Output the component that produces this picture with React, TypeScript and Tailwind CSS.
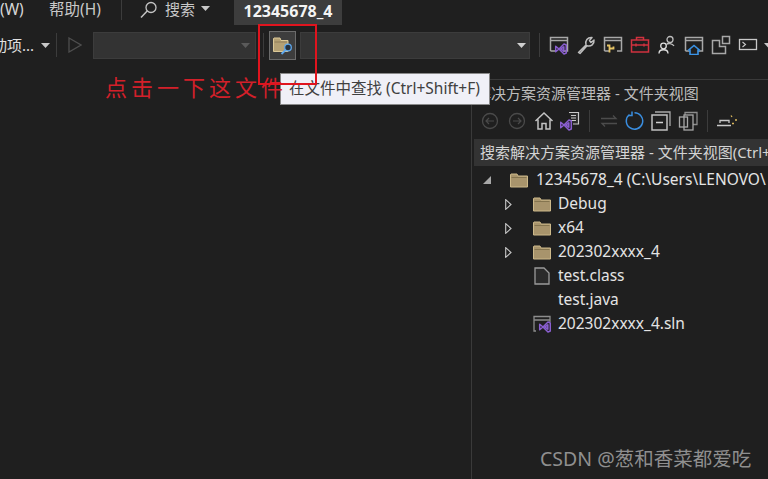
// App.tsx
import React from 'react';

const font = { fontFamily: '"Noto Sans", "Noto Sans CJK SC", sans-serif' };

// small dropdown arrow used on the menu and the combo boxes
const Caret: React.FC<{ className?: string }> = ({ className }) => (
    <svg width="9" height="5" viewBox="0 0 9 5" className={className}>
        <path d="M0 0h9L4.5 5z" fill="currentColor" />
    </svg>
);

const Sep: React.FC<{ className?: string }> = ({ className }) => (
    <div className={`w-px shrink-0 bg-[#3c3c3c] ${className ?? ''}`} />
);

const VsMark: React.FC<{ x: number; y: number }> = ({ x, y }) => (
    <path
        transform={`translate(${x} ${y})`}
        d="M0.7 3.2 L4 6 L9 1 L11.3 2 V10 L9 11 L4 6 L0.7 8.8 Z M8.8 3.8 L6 6 L8.8 8.2 Z"
        fill="none"
        stroke="#8a5fd0"
        strokeWidth="1.5"
        strokeLinejoin="round"
    />
);

const FolderIcon: React.FC = () => (
    <svg width="18" height="16" viewBox="0 0 18 16" className="shrink-0">
        <path d="M0.500 2.500V15H17.500V4H8L7 2H1z" fill="#a8946c" stroke="#cdb98a" strokeWidth="1" />
        <path d="M1.500 5.500h15" stroke="#84744f" strokeWidth="1" />
    </svg>
);

const WindowIcon: React.FC<{ children?: React.ReactNode }> = ({ children }) => (
    <svg width="20" height="20" viewBox="0 0 20 20" className="shrink-0">
        <path d="M1.500 16V2.500H18.500V16H14" fill="none" stroke="#a8a8a8" strokeWidth="1.500" />
        <path d="M1.500 5.500H18.500" stroke="#a8a8a8" strokeWidth="1.500" />
        <path d="M1.500 16H6" stroke="#a8a8a8" strokeWidth="1.500" />
        {children}
    </svg>
);

const ToolIcons: React.FC = () => (
    <div className="flex items-center gap-[7px] ml-[9px] shrink-0">
        <WindowIcon>
            <VsMark x={6} y={8} />
        </WindowIcon>
        <svg width="20" height="20" viewBox="0 0 20 20" className="shrink-0">
            <path d="M2.500 17.500 L10 10 C8.800 6 11.500 2 16 2.500 L13.500 5.500 L15 7.500 L18 5 C18.500 9 15 12 11 10.800 L4 18.500 Z" fill="none" stroke="#bdbdbd" strokeWidth="1.500" strokeLinejoin="round" />
        </svg>
        <WindowIcon>
            <path d="M4 10.500h2.500v7M6.500 13.500h4v-2" fill="none" stroke="#e5c365" strokeWidth="1.800" />
        </WindowIcon>
        <svg width="20" height="20" viewBox="0 0 20 20" className="shrink-0">
            <rect x="1.500" y="5" width="17" height="12" fill="none" stroke="#d0323f" strokeWidth="1.500" />
            <path d="M6.500 5V2.500h7V5M1.500 10h17M6 8.500v3M14 8.500v3" fill="none" stroke="#d0323f" strokeWidth="1.500" />
        </svg>
        <svg width="20" height="20" viewBox="0 0 20 20" className="shrink-0">
            <circle cx="13" cy="4.500" r="3" fill="none" stroke="#bdbdbd" strokeWidth="1.300" />
            <path d="M9.500 9.500c1-1.500 6-1.500 7.500 1.500" fill="none" stroke="#bdbdbd" strokeWidth="1.300" />
            <circle cx="6.500" cy="11" r="2.800" fill="none" stroke="#e0e0e0" strokeWidth="1.300" />
            <path d="M2 18.500c0-5 9-5 9 0" fill="none" stroke="#e0e0e0" strokeWidth="1.300" />
        </svg>
        <WindowIcon>
            <path d="M4 15.500 L10 10.500 L16 15.500 M6 14.500 V19.500 H14 V14.500" fill="#1f1f1f" stroke="#3a94e8" strokeWidth="1.600" />
        </WindowIcon>
        <svg width="20" height="20" viewBox="0 0 20 20" className="shrink-0">
            <path d="M1.500 5.500H8.500V11.500H14.500V18.500H1.500Z" fill="none" stroke="#a8a8a8" strokeWidth="1.500" />
            <rect x="11.500" y="1.500" width="7" height="7" fill="none" stroke="#a8a8a8" strokeWidth="1.500" />
        </svg>
        <svg width="20" height="20" viewBox="0 0 20 20" className="shrink-0">
            <rect x="1.500" y="4.500" width="17" height="10" fill="none" stroke="#c8c8c8" strokeWidth="1.300" />
            <path d="M4.500 7 L7.500 9.500 L4.500 12" fill="none" stroke="#c8c8c8" strokeWidth="1.100" />
        </svg>
        <Caret className="text-[#c8c8c8] -ml-[1px] shrink-0" />
    </div>
);

const PanelTools: React.FC = () => (
    <div className="flex items-center h-[30px] mb-[3px] pl-[9px] shrink-0">
        <svg width="18" height="18" viewBox="0 0 18 18" className="shrink-0">
            <circle cx="9" cy="9" r="7.500" fill="none" stroke="#4a4a4a" strokeWidth="1.300" />
            <path d="M13 9H5M8 6L5 9l3 3" fill="none" stroke="#4a4a4a" strokeWidth="1.200" />
        </svg>
        <svg width="18" height="18" viewBox="0 0 18 18" className="shrink-0 ml-[9px]">
            <circle cx="9" cy="9" r="7.500" fill="none" stroke="#4a4a4a" strokeWidth="1.300" />
            <path d="M5 9h8M10 6l3 3-3 3" fill="none" stroke="#4a4a4a" strokeWidth="1.200" />
        </svg>
        <svg width="20" height="20" viewBox="0 0 20 20" className="shrink-0 ml-[8px]">
            <path d="M1.500 10 L10 2 L18.500 10 M4 8.500V18H8V12.500H12V18H16V8.500" fill="none" stroke="#c4c4c4" strokeWidth="1.500" />
        </svg>
        <svg width="20" height="20" viewBox="0 0 20 20" className="shrink-0 ml-[6px]">
            <path d="M9 1.500H18.500V13H13" fill="#2a2a2a" stroke="#c8c8c8" strokeWidth="1.200" />
            <path d="M11 4.500h5M11 7h5M11 9.500h5" stroke="#c8c8c8" strokeWidth="1" />
            <VsMark x={0} y={8} />
        </svg>
        <Sep className="h-[22px] ml-[9px]" />
        <svg width="18" height="14" viewBox="0 0 18 14" className="shrink-0 ml-[10px]">
            <path d="M1 4.500H16L13 1.500M17 9.500H2L5 12.500" fill="none" stroke="#4c4c4c" strokeWidth="1.300" />
        </svg>
        <svg width="20" height="20" viewBox="0 0 20 20" className="shrink-0 ml-[6px]">
            <path d="M5.500 3.500 A8.200 8.200 0 1 0 10.500 1.800 M8 0.500 V4.500 H4" fill="none" stroke="#3a8ee0" strokeWidth="1.500" />
        </svg>
        <svg width="20" height="20" viewBox="0 0 20 20" className="shrink-0 ml-[7px]">
            <path d="M4 1H19V15" fill="none" stroke="#a8a8a8" strokeWidth="1.300" />
            <rect x="1" y="4" width="15" height="15" fill="none" stroke="#c0c0c0" strokeWidth="1.500" />
            <path d="M5 11.500h7" stroke="#d0d0d0" strokeWidth="1.500" />
        </svg>
        <svg width="20" height="20" viewBox="0 0 20 20" className="shrink-0 ml-[7px]">
            <path d="M7 4V1.500H19V13.500H15" fill="none" stroke="#8c8c8c" strokeWidth="1.300" />
            <rect x="1.500" y="6" width="8" height="10" fill="none" stroke="#a8a8a8" strokeWidth="1.300" />
            <rect x="6" y="4" width="9" height="15" fill="none" stroke="#a8a8a8" strokeWidth="1.300" />
        </svg>
        <Sep className="h-[22px] ml-[9px]" />
        <svg width="20" height="14" viewBox="0 0 20 14" className="shrink-0 ml-[9px]">
            <path d="M0 11.500H14M3 9V6.500H12V9" fill="none" stroke="#c8c8c8" strokeWidth="1.300" />
            <path d="M14 1.500l1 1.500M18 6h2M15 9.500h2" stroke="#d9b65c" strokeWidth="1.300" />
        </svg>
    </div>
);

const TreeRow: React.FC<{ name: string; arrow?: boolean; icon?: React.ReactNode }> = ({ name, arrow, icon }) => (
    <div className="flex items-center h-[24px] pl-[23px]">
        <div className="w-[13px] shrink-0 flex items-center">
            {arrow && (
                <svg width="7" height="11" viewBox="0 0 7 11">
                    <path d="M0.700 0.700 L6 5.500 L0.700 10.300 Z" fill="none" stroke="#c8c8c8" strokeWidth="1.100" />
                </svg>
            )}
        </div>
        <div className="w-[18px] ml-[15px] shrink-0 flex justify-center">{icon}</div>
        <span className="ml-[7px] whitespace-nowrap">{name}</span>
    </div>
);

const App: React.FC = () => {
    return (
        <div className="relative w-[768px] h-[479px] overflow-hidden bg-[#1f1f1f] text-[15.5px] text-[#d6d6d6] flex flex-col" style={font}>
            {/* Menu bar */}
            <div className="flex items-start h-[25px] shrink-0">
                <div className="flex items-center h-[19px] w-[234px] shrink-0">
                    <span className="w-[49px] shrink-0">(W)</span>
                    <span className="w-[72px] shrink-0 text-[#c8c8c8]">帮助(H)</span>
                    <Sep className="h-[20px]" />
                    <svg width="18" height="18" viewBox="0 0 18 18" className="ml-[18px] shrink-0">
                        <circle cx="11" cy="6.500" r="5" fill="none" stroke="#c4c4c4" strokeWidth="1.300" />
                        <path d="M7.200 10 L1 16.500" stroke="#c4c4c4" strokeWidth="1.500" />
                    </svg>
                    <span className="ml-[7px] text-[15px] text-[#c8c8c8]">搜索</span>
                    <Caret className="ml-[6px] -mt-[3px] text-[#c8c8c8] shrink-0" />
                </div>
                <div className="w-[108px] h-[25px] bg-[#3d3d3d] flex items-center justify-center pb-[3px] text-[16px] font-bold text-[#f4f4f4]">12345678_4</div>
            </div>

            {/* Standard toolbar */}
            <div className="flex items-center h-[36px] shrink-0 mt-[2px]">
                <div className="w-[34px] shrink-0 flex justify-end overflow-hidden">
                    <span className="shrink-0 whitespace-nowrap text-[15px] text-[#e0e0e0]">动项...</span>
                </div>
                <Caret className="ml-[7px] text-[#c8c8c8] shrink-0" />
                <Sep className="h-[24px] ml-[6px]" />
                <svg width="14" height="16" viewBox="0 0 14 16" className="ml-[11px] shrink-0">
                    <path d="M1 1 L13 8 L1 15 Z" fill="none" stroke="#4e4e4e" strokeWidth="1.300" />
                </svg>
                <div className="ml-[11px] w-[163px] h-[27px] shrink-0 bg-[#333333] border border-[#3c3c3c] flex items-center justify-end pr-[5px]">
                    <Caret className="text-[#5a5a5a]" />
                </div>
                <Sep className="h-[24px] ml-[7px]" />
                <div className="ml-[5px] w-[27px] h-[29px] shrink-0 bg-[#3d3d3d] border border-[#6b6b6b] flex items-center justify-center">
                    <svg width="20" height="19" viewBox="0 0 20 19">
                        <path d="M0.500 2.500V15.500H15V4.500H8L7 2H1z" fill="#b5a174" stroke="#dcc998" strokeWidth="1" />
                        <path d="M1.500 6H14" stroke="#8f7d59" />
                        <circle cx="15" cy="11.500" r="3.300" fill="#25313e" stroke="#5ea8ee" strokeWidth="1.300" />
                        <path d="M12.600 14 L8.500 18" stroke="#5ea8ee" strokeWidth="1.800" />
                    </svg>
                </div>
                <div className="ml-[4px] w-[230px] h-[27px] shrink-0 bg-[#333333] border border-[#3c3c3c] flex items-center justify-end pr-[3px]">
                    <Caret className="text-[#d0d0d0]" />
                </div>
                <Sep className="h-[24px] ml-[9px]" />
                <ToolIcons />
            </div>

            {/* Workspace, the folder view panel on the right */}
            <div className="flex flex-1 mt-[16px] min-h-0">
                <div className="w-[471px] shrink-0" />
                <div className="flex-1 min-w-0 border-l border-t border-[#3a3a3a] flex flex-col">
                    <div className="h-[26px] pl-[4px] flex items-center whitespace-nowrap text-[15px] text-[#bcbcbc]">解决方案资源管理器 - 文件夹视图</div>
                    <PanelTools />
                    <div className="ml-[2px] h-[27px] bg-[#333333] pl-[6px] flex items-center whitespace-nowrap overflow-hidden text-[15px] text-[#d4d4d4] shrink-0">搜索解决方案资源管理器 - 文件夹视图(Ctrl+</div>
                    <div className="flex-1 text-[#e4e4e4] pt-[2px] pl-[10px] whitespace-nowrap overflow-hidden">
                        <div className="flex items-center h-[24px]">
                            <svg width="10" height="10" viewBox="0 0 10 10" className="shrink-0">
                                <path d="M9 1V9H1Z" fill="#a8a8a8" />
                            </svg>
                            <div className="ml-[18px] shrink-0">
                                <FolderIcon />
                            </div>
                            <span className="ml-[8px]">12345678_4 (C:\Users\LENOVO\</span>
                        </div>
                        <TreeRow name="Debug" arrow icon={<FolderIcon />} />
                        <TreeRow name="x64" arrow icon={<FolderIcon />} />
                        <TreeRow name="202302xxxx_4" arrow icon={<FolderIcon />} />
                        <TreeRow
                            name="test.class"
                            icon={
                                <svg width="16" height="18" viewBox="0 0 16 18">
                                    <path d="M1 1H10L15 6V17H1Z" fill="#2a2a2a" stroke="#9a9a9a" strokeWidth="1.300" />
                                </svg>
                            }
                        />
                        <TreeRow name="test.java" />
                        <TreeRow
                            name="202302xxxx_4.sln"
                            icon={
                                <svg width="18" height="18" viewBox="0 0 18 18">
                                    <path d="M3 16H1V1.500H17V7M1 5H17" fill="none" stroke="#8c8c8c" strokeWidth="1.300" />
                                    <VsMark x={6} y={6} />
                                </svg>
                            }
                        />
                    </div>
                </div>
            </div>

            {/* Tooltip and annotations drawn over the screenshot */}
            <div className="absolute left-[280px] top-[73px] w-[210px] h-[32px] bg-[#f0f0f7] border border-[#8a8a8a] text-[#404040] pl-[8px] flex items-center whitespace-nowrap">在文件中查找 (Ctrl+Shift+F)</div>
            <div className="absolute left-[105px] top-[71px] text-[22px] leading-[30px] tracking-[4px] text-[#d3202a] whitespace-nowrap" style={{ fontFamily: '"Noto Sans CJK SC", sans-serif' }}>点击一下这文件</div>
            <div className="absolute left-[258px] top-[24px] w-[59px] h-[61px] border-2 border-[#e0141e]" />
            <div className="absolute left-[540px] top-[446px] text-[19.5px] leading-[26px] text-[#8f8f8f] whitespace-nowrap">CSDN @葱和香菜都爱吃</div>
        </div>
    );
};

export default App;
